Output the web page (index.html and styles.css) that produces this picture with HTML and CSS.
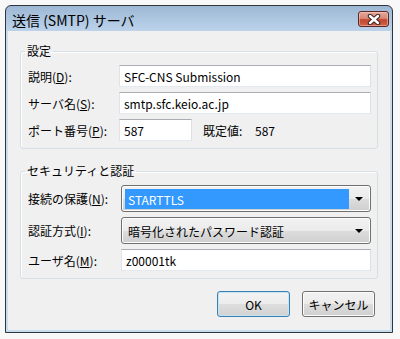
FILE: index.html
```html
<!DOCTYPE html>
<html lang="ja">
<head>
  <meta charset="UTF-8">
  <meta name="viewport" content="width=device-width, initial-scale=1.0">
  <title>送信 (SMTP) サーバ</title>
  <link rel="stylesheet" href="styles.css">
</head>
<body>
  <div class="window">
    <div class="titlebar">
      <span class="title">送信 (SMTP) サーバ</span>
      <button class="close" title="閉じる">
        <svg width="14" height="11" viewBox="0 0 14 11">
          <path d="M3 2 L11 9 M11 2 L3 9" stroke="#3d2523" stroke-width="4.4" stroke-linecap="round"/>
          <path d="M3 2 L11 9 M11 2 L3 9" stroke="#ffffff" stroke-width="2.4" stroke-linecap="round"/>
        </svg>
      </button>
    </div>

    <div class="client">
      <fieldset class="group server">
        <legend>設定</legend>
        <div class="rows">
          <div class="row">
            <label>説明(<u>D</u>):</label>
            <input class="text wide" type="text" value="SFC-CNS Submission">
          </div>
          <div class="row">
            <label>サーバ名(<u>S</u>):</label>
            <input class="text wide" type="text" value="smtp.sfc.keio.ac.jp">
          </div>
          <div class="row">
            <label>ポート番号(<u>P</u>):</label>
            <input class="text port" type="text" value="587">
            <span class="default-label">既定値:</span>
            <span class="default-value">587</span>
          </div>
        </div>
      </fieldset>

      <fieldset class="group security">
        <legend>セキュリティと認証</legend>
        <div class="rows">
          <div class="row">
            <label>接続の保護(<u>N</u>):</label>
            <div class="select focused">
              <span class="value">STARTTLS</span>
              <span class="arrow"></span>
            </div>
          </div>
          <div class="row">
            <label>認証方式(<u>I</u>):</label>
            <div class="select">
              <span class="value">暗号化されたパスワード認証</span>
              <span class="arrow"></span>
            </div>
          </div>
          <div class="row">
            <label>ユーザ名(<u>M</u>):</label>
            <input class="text wide" type="text" value="z00001tk">
          </div>
        </div>
      </fieldset>

      <div class="buttons">
        <button class="btn default">OK</button>
        <button class="btn">キャンセル</button>
      </div>
    </div>
  </div>
</body>
</html>
```

FILE: styles.css
```css
body {
  margin: 0;
  padding: 5px;
  background-color: #f8f8f8;
  font-family: "Noto Sans CJK JP", "Noto Sans", sans-serif;
  font-size: 12px;
  color: #000;
}

.window {
  box-sizing: border-box;
  width: 388px;
  height: 328px;
  border: 1px solid #30353b;
  border-radius: 6px 6px 0 0;
  padding: 0 2px 2px;
  background: linear-gradient(to bottom, #9db8d5 0, #bcd3ea 25px, #c8dcf0 25px);
  display: flex;
  flex-direction: column;
}

.titlebar {
  height: 25px;
  flex: none;
  display: flex;
  align-items: flex-start;
  justify-content: space-between;
}

.title {
  margin: 4px 0 0 4px;
  font-size: 14px;
  line-height: 20px;
}

.close {
  box-sizing: border-box;
  width: 31px;
  height: 16px;
  margin: 5px 1px 0 0;
  padding: 0;
  border: 1px solid #5b2823;
  border-radius: 3px;
  background: linear-gradient(to bottom, #e3a698 0%, #d88a79 45%, #c4472f 55%, #cf6247 100%);
  box-shadow: inset 0 0 0 1px rgba(255, 220, 210, 0.45);
  display: flex;
  align-items: center;
  justify-content: center;
}

.client {
  flex: 1;
  background-color: #f0f0f0;
  padding: 12px 12px 0;
}

.group {
  margin: 0;
  min-width: 0;
  border: 1px solid #d5dfe5;
  border-radius: 3px;
  padding: 6px 6px 7px 7px;
  box-shadow: inset 1px 1px 0 #ffffff;
}

.group legend {
  margin-left: -3px;
  padding: 0 2px;
  line-height: 16px;
}

.security {
  margin-top: 14px;
}

.rows {
  display: flex;
  flex-direction: column;
  gap: 5px;
}

.row {
  display: flex;
  align-items: center;
}

.server label {
  width: 91px;
}

.security label {
  width: 93px;
}

.text {
  box-sizing: border-box;
  height: 22px;
  margin: 0;
  padding: 0 4px;
  border: 1px solid;
  border-color: #abadb3 #dbdfe6 #e3e9ef #e2e3ea;
  background: #fff;
  font: inherit;
  color: #000;
  outline: none;
}

.server .wide {
  width: 252px;
}

.security .wide {
  width: 250px;
}

.port {
  width: 73px;
}

.default-label {
  margin-left: 11px;
  width: 52px;
}

.select {
  box-sizing: border-box;
  width: 250px;
  height: 27px;
  padding: 3px 3px 2px;
  border: 1px solid #707070;
  border-radius: 3px;
  background: linear-gradient(to bottom, #f2f2f2 0%, #ebebeb 50%, #dddddd 51%, #cfcfcf 100%);
  box-shadow: inset 0 0 0 1px #fcfcfc;
  display: flex;
  align-items: stretch;
}

.select .value {
  flex: 1;
  padding-left: 3px;
  display: flex;
  align-items: center;
}

.select.focused .value {
  background-color: #3399ff;
  color: #fff;
}

.select .arrow {
  width: 18px;
  display: flex;
  align-items: center;
  justify-content: center;
}

.select .arrow::after {
  content: "";
  border-left: 4px solid transparent;
  border-right: 4px solid transparent;
  border-top: 4px solid #000;
  margin-left: 2px;
}

.buttons {
  display: flex;
  justify-content: flex-end;
  gap: 12px;
  margin: 12px 3px 0 0;
}

.btn {
  box-sizing: border-box;
  width: 73px;
  height: 26px;
  margin: 0;
  padding: 0;
  border: 1px solid #707070;
  border-radius: 3px;
  background: linear-gradient(to bottom, #f2f2f2 0%, #ebebeb 50%, #dddddd 51%, #cfcfcf 100%);
  box-shadow: inset 0 0 0 1px #fcfcfc;
  font: inherit;
  color: #000;
}

.btn.default {
  border-color: #3c7fb1;
  background: linear-gradient(to bottom, #f3f3f3 0%, #ececec 50%, #dedede 51%, #d2d2d2 100%);
  box-shadow: inset 0 0 0 1px #c4e5f6;
}
```
